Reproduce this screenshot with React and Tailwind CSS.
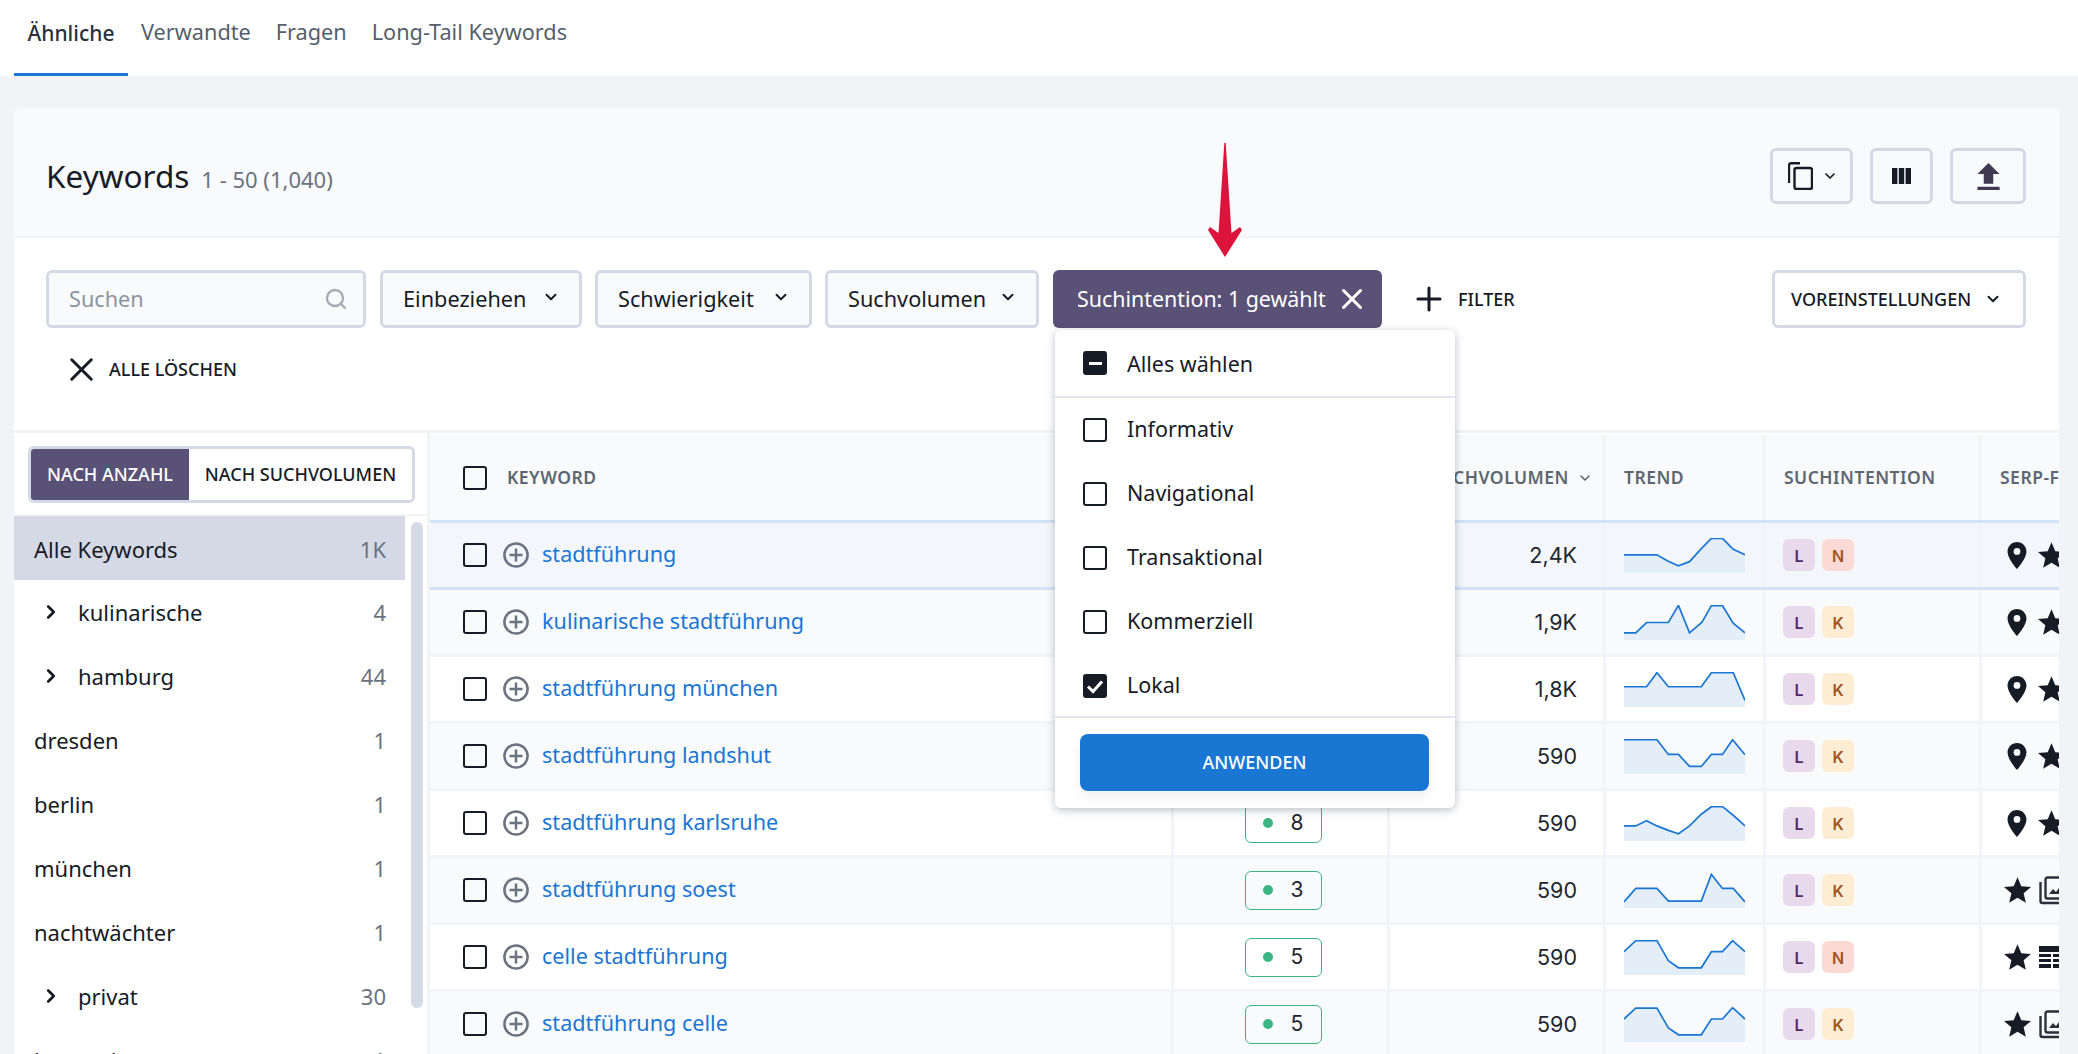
import React from "react";
import { ChevronDown, ChevronRight, Plus, Search, X } from "lucide-react";

const sans = "font-['Noto_Sans',sans-serif]";
const nums = "font-['Inter',sans-serif]";

const Pin = () => (
  <svg viewBox="5 2 14 20" className="w-[20px] h-[27px] shrink-0" fill="#171b26">
    <path d="M12 2C8.13 2 5 5.13 5 9c0 5.25 7 13 7 13s7-7.75 7-13c0-3.87-3.13-7-7-7zm0 9.5a2.5 2.5 0 010-5 2.5 2.5 0 010 5z" />
  </svg>
);

const Star = () => (
  <svg viewBox="2 2 20 19" className="w-[27px] h-[26px] shrink-0" fill="#171b26">
    <path d="M12 17.27L18.18 21l-1.64-7.03L22 9.24l-7.19-.61L12 2 9.19 8.63 2 9.24l5.46 4.73L5.82 21z" />
  </svg>
);

const Gallery = () => (
  <svg viewBox="0 0 28 29" className="w-[28px] h-[29px] shrink-0" fill="none">
    <path d="M1.5 6v19a2 2 0 0 0 2 2h20" stroke="#2b2f3a" strokeWidth="2.4" />
    <rect x="6.5" y="1.5" width="21" height="21" rx="2" stroke="#2b2f3a" strokeWidth="2.4" />
    <path d="M10 18l4-5 3 3 3-4 5 6z" fill="#2b2f3a" />
  </svg>
);

const TableIcon = () => (
  <svg viewBox="0 0 26 23" className="w-[26px] h-[23px] shrink-0" fill="#171b26">
    <rect x="0" y="0" width="26" height="6" />
    <rect x="0" y="8" width="12" height="3" />
    <rect x="14" y="8" width="12" height="3" />
    <rect x="0" y="13" width="12" height="3" />
    <rect x="14" y="13" width="12" height="3" />
    <rect x="0" y="18" width="12" height="4" />
    <rect x="14" y="18" width="12" height="4" />
  </svg>
);

const CheckBox = ({ state }) => {
  if (state === "on") {
    return (
      <span className="w-6 h-6 rounded-[3px] bg-[#171b26] flex items-center justify-center shrink-0">
        <svg viewBox="0 0 24 24" className="w-6 h-6" fill="none" stroke="#fff" strokeWidth="3">
          <path d="M5 12.5l5 5 9-10" />
        </svg>
      </span>
    );
  }
  if (state === "some") {
    return (
      <span className="w-6 h-6 rounded-[3px] bg-[#171b26] flex items-center justify-center shrink-0">
        <span className="w-[13px] h-[3px] bg-white" />
      </span>
    );
  }
  return <span className="w-6 h-6 rounded-[3px] border-[2.5px] border-[#171b26] shrink-0" />;
};

const AddIcon = () => (
  <svg viewBox="0 0 26 26" className="w-[26px] h-[26px] shrink-0" fill="none" stroke="#6b7280" strokeWidth="2.5">
    <circle cx="13" cy="13" r="11.6" />
    <path d="M13 6.5v13M6.5 13h13" />
  </svg>
);

const FilterButton = ({ label, width }) => (
  <button className={`${width} h-[58px] rounded-md border-[3px] border-[#d5d8e5] bg-[#f9fafc] flex items-center justify-between pl-[20px] pr-[19px] text-[21.7px] text-[#171b26] shrink-0`}>
    <span>{label}</span>
    <ChevronDown size={18} strokeWidth={2.6} className="mb-1" />
  </button>
);

const Spark = ({ pts }) => {
  const line = pts.map((p) => p.join(",")).join(" ");
  const area = `0,100 ${line} 360,100`;
  return (
    <svg viewBox="0 -2 360 102" className="w-[121px] h-[35px]" preserveAspectRatio="none">
      <polygon points={area} fill="#e3eef9" />
      <polyline points={line} fill="none" stroke="#1976d2" strokeWidth="5" />
    </svg>
  );
};

const Intent = ({ k }) => {
  const cls = {
    L: "bg-[#e8d9ec] text-[#4f2a6b]",
    N: "bg-[#fbdad6] text-[#a0551f]",
    K: "bg-[#feedd3] text-[#a0551f]",
  };
  return (
    <span className={`${cls[k]} ${nums} w-8 h-8 pt-px rounded-md flex items-center justify-center text-[16px] font-semibold`}>
      {k}
    </span>
  );
};

const rows = [
  { kw: "stadtführung", d: "", vol: "2,4K", i: "N", serp: "pin", bg: "bg-[#f3f7fc]", first: true,
    pts: [[0,47],[98,47],[130,65],[162,79],[195,67],[230,29],[260,-1],[293,-1],[325,31],[360,47]] },
  { kw: "kulinarische stadtführung", d: "", vol: "1,9K", i: "K", serp: "pin", bg: "bg-[#f9fafc]",
    pts: [[0,79],[35,79],[67,49],[132,49],[162,-1],[195,79],[232,48],[260,0],[293,0],[325,51],[360,79]] },
  { kw: "stadtführung münchen", d: "", vol: "1,8K", i: "K", serp: "pin", bg: "bg-white",
    pts: [[0,41],[67,41],[98,0],[132,41],[230,41],[260,0],[325,0],[360,81]] },
  { kw: "stadtführung landshut", d: "", vol: "590", i: "K", serp: "pin", bg: "bg-[#f9fafc]",
    pts: [[0,0],[98,0],[132,43],[162,43],[195,78],[230,78],[260,43],[293,43],[323,0],[360,44]] },
  { kw: "stadtführung karlsruhe", d: "8", vol: "590", i: "K", serp: "pin", bg: "bg-white",
    pts: [[0,56],[35,56],[67,41],[98,56],[132,69],[162,79],[195,56],[230,22],[260,0],[293,0],[325,25],[360,56]] },
  { kw: "stadtführung soest", d: "3", vol: "590", i: "K", serp: "gallery", bg: "bg-[#f9fafc]",
    pts: [[0,82],[35,43],[98,43],[132,80],[230,80],[260,2],[293,43],[325,43],[360,82]] },
  { kw: "celle stadtführung", d: "5", vol: "590", i: "N", serp: "table", bg: "bg-white",
    pts: [[0,32],[35,0],[98,0],[132,58],[162,79],[230,79],[260,32],[293,32],[323,0],[360,32]] },
  { kw: "stadtführung celle", d: "5", vol: "590", i: "K", serp: "gallery", bg: "bg-[#f9fafc]",
    pts: [[0,33],[35,1],[98,1],[132,59],[162,79],[230,79],[260,33],[293,33],[323,0],[360,33]] },
];

const groups = [
  { name: "kulinarische", n: "4", more: true },
  { name: "hamburg", n: "44", more: true },
  { name: "dresden", n: "1" },
  { name: "berlin", n: "1" },
  { name: "münchen", n: "1" },
  { name: "nachtwächter", n: "1" },
  { name: "privat", n: "30", more: true },
  { name: "bremerhaven", n: "1" },
];

const cell = "border-r-[3px] border-[#f3f4f8] flex items-center";
const headCell = "border-r-[3px] border-[#f3f4f8] flex items-center whitespace-nowrap text-[17.5px] font-semibold tracking-[0.5px] text-[#5c6670]";
const gridCols = "grid grid-cols-[744px_216px_216px_160px_216px_120px]";
const choices = ["Informativ", "Navigational", "Transaktional", "Kommerziell"];

export default function App() {
  return (
    <div className={`${sans} relative h-[1054px] overflow-hidden bg-[#f2f3f7] text-[#171b26]`}>
      <nav className="h-[76px] bg-white flex pl-[14px] text-[21.7px] text-[#555f6b]">
        <a className="w-[114px] h-full border-b-[3px] border-[#1976d2] text-[#2b2f3a] font-medium text-[21px] flex justify-center pt-[18px]">Ähnliche</a>
        <a className="ml-[13px] pt-[16px]">Verwandte</a>
        <a className="ml-[25px] pt-[16px]">Fragen</a>
        <a className="ml-[25px] pt-[16px]">Long-Tail Keywords</a>
      </nav>

      <main className="mt-[32px] ml-[14px] mr-[19px] rounded-t-md overflow-hidden bg-white">
        <header className="h-[130px] pt-[8px] bg-[#f9fafc] border-b-2 border-[#f2f3f7] flex items-center justify-between pl-[32px] pr-[33px]">
          <div className="flex items-baseline gap-[12px]">
            <h1 className="text-[31.5px]">Keywords</h1>
            <span className="text-[22px] text-[#6b7280]">1 - 50 (1,040)</span>
          </div>
          <div className="flex gap-[17px]">
            <button className="w-[83px] h-[56px] rounded-md border-[3px] border-[#d5d8e5] flex items-center pl-[15px] gap-[9px]">
              <svg viewBox="0 0 25 28" className="w-[25px] h-[28px]" fill="none" stroke="#171b26" strokeWidth="2.4">
                <path d="M12 1.2H3a2 2 0 0 0-2 2V21" />
                <rect x="6.5" y="6" width="17.5" height="21" rx="2" />
              </svg>
              <ChevronDown size={16} strokeWidth={2.6} />
            </button>
            <button className="w-[63px] h-[56px] rounded-md border-[3px] border-[#d5d8e5] flex items-center justify-center">
              <svg viewBox="0 0 19 16" className="w-[19px] h-[16px]" fill="#171b26">
                <rect x="0" y="0" width="5.4" height="16" />
                <rect x="6.8" y="0" width="5.4" height="16" />
                <rect x="13.6" y="0" width="5.4" height="16" />
              </svg>
            </button>
            <button className="w-[76px] h-[56px] rounded-md border-[3px] border-[#d5d8e5] flex items-center justify-center">
              <svg viewBox="5 3 14 17" className="w-[23px] h-[27px]" fill="#3f3a52">
                <path d="M9 16h6v-6h4l-7-7-7 7h4zm-4 2h14v2H5z" />
              </svg>
            </button>
          </div>
        </header>

        <section className="h-[192px] pt-[32px] pl-[32px] pr-[33px]">
          <div className="flex items-center">
            <div className="w-[320px] h-[58px] rounded-md border-[3px] border-[#d5d8e5] bg-[#f9fafc] flex items-center justify-between pl-[20px] pr-[15px] text-[21.7px] text-[#8d949e] shrink-0">
              <span>Suchen</span>
              <Search size={24} strokeWidth={2.3} className="text-[#a5abb5]" />
            </div>
            <div className="flex gap-[13px] ml-[14px]">
              <FilterButton label="Einbeziehen" width="w-[202px]" />
              <FilterButton label="Schwierigkeit" width="w-[217px]" />
              <FilterButton label="Suchvolumen" width="w-[214px]" />
              <button className="w-[329px] ml-px h-[58px] rounded-md bg-[#5a5276] text-white flex items-center justify-between pl-[24px] pr-[13px] text-[21.4px] whitespace-nowrap shrink-0">
                <span>Suchintention: 1 gewählt</span>
                <X size={34} strokeWidth={2.1} />
              </button>
            </div>
            <button className="ml-[28px] flex items-center gap-[10px] text-[18px] font-medium">
              <Plus size={38} strokeWidth={1.9} />
              FILTER
            </button>
            <button className="ml-auto w-[254px] h-[58px] rounded-md border-[3px] border-[#d5d8e5] flex items-center justify-between pl-[16px] pr-[21px] text-[18px] font-medium">
              VOREINSTELLUNGEN
              <ChevronDown size={18} strokeWidth={2.6} />
            </button>
          </div>
          <button className="mt-[22px] ml-[16px] w-fit flex items-center gap-[8px] text-[18px] font-medium">
            <X size={39} strokeWidth={1.85} />
            ALLE LÖSCHEN
          </button>
        </section>

        <div className="flex border-t-[3px] border-[#f2f3f7]">
          <aside className="w-[413px] shrink-0 bg-white">
            <div className="h-[83px] pt-[13px] pl-[14px] pr-[12px] border-b-2 border-[#f2f3f7]">
              <div className="h-[57px] rounded-md border-[3px] border-[#d5d8e5] flex text-[18px] font-medium overflow-hidden whitespace-nowrap">
                <div className="w-[158px] bg-[#5a5276] text-white flex items-center justify-center">NACH ANZAHL</div>
                <div className="flex-1 flex items-center justify-center">NACH SUCHVOLUMEN</div>
              </div>
            </div>
            <div className="flex">
              <ul className="w-[391px] text-[22px]">
                <li className="h-[64px] pt-[2px] bg-[#d5d8e5] flex items-center justify-between pl-[20px] pr-[19px]">
                  <span>Alle Keywords</span>
                  <span className="text-[#6b7280]">1K</span>
                </li>
                {groups.map((g) => (
                  <li key={g.name} className="h-[64px] flex items-center justify-between pl-[20px] pr-[19px]">
                    <span className="flex items-center">
                      {g.more && <ChevronRight size={22} strokeWidth={3} className="ml-[6px] mr-[16px]" />}
                      {g.name}
                    </span>
                    <span className="text-[#6b7280]">{g.n}</span>
                  </li>
                ))}
              </ul>
              <div className="ml-[6px] mt-[6px] w-3 h-[486px] rounded-md bg-[#d5d8e5]" />
            </div>
          </aside>

          <div className="flex-1 min-w-0 border-l-[3px] border-[#f2f3f7] overflow-hidden">
            <div className={`${gridCols} h-[85px] bg-[#f9fafc] mt-[2px]`}>
              <div className={`${headCell} pl-[33px] gap-[20px]`}>
                <CheckBox />
                KEYWORD
              </div>
              <div className={`${headCell} justify-center`}>SCHWIERIGKEIT</div>
              <div className={`${headCell} justify-end pr-[10px] gap-[8px]`}>
                SUCHVOLUMEN
                <ChevronDown size={16} strokeWidth={2.4} />
              </div>
              <div className={`${headCell} pl-[18px]`}>TREND</div>
              <div className={`${headCell} pl-[18px]`}>SUCHINTENTION</div>
              <div className={`${headCell} pl-[18px]`}>SERP-FEATURES</div>
            </div>

            {rows.map((r) => (
              <div
                key={r.kw}
                className={`${gridCols} ${r.bg} ${
                  r.first ? "h-[70px] border-y-[3px] border-[#d2e3f8]" : "h-[67px] border-b-[3px] border-[#f3f4f8]"
                }`}
              >
                <div className={`${cell} pl-[33px]`}>
                  <CheckBox />
                  <span className="ml-[16px]"><AddIcon /></span>
                  <a className="ml-[13px] pb-px text-[21.6px] text-[#1976d2]">{r.kw}</a>
                </div>
                <div className={`${cell} justify-center`}>
                  {r.d && (
                    <span className={`${nums} w-[77px] h-[39px] ml-[5px] rounded-md border-[1.5px] border-[#3bb583] flex items-center pl-[17px] gap-[18px] text-[21px] text-[#23262f]`}>
                      <span className="w-[10px] h-[10px] rounded-full bg-[#3bb583]" />
                      {r.d}
                    </span>
                  )}
                </div>
                <div className={`${cell} ${nums} justify-end pr-[26px] text-[21.5px] text-[#23262f]`}>{r.vol}</div>
                <div className={`${cell} pl-[18px]`}>
                  <Spark pts={r.pts} />
                </div>
                <div className={`${cell} pl-[17px] gap-[7px]`}>
                  <Intent k="L" />
                  <Intent k={r.i} />
                </div>
                <div className="flex items-center gap-[8px] pl-[22px]">
                  {r.serp === "pin" ? (
                    <span className="pl-[3px] mr-[3px]"><Pin /></span>
                  ) : (
                    <Star />
                  )}
                  {r.serp === "pin" && <Star />}
                  {r.serp === "gallery" && <Gallery />}
                  {r.serp === "table" && <TableIcon />}
                </div>
              </div>
            ))}
          </div>
        </div>
      </main>

      <svg viewBox="0 0 34 114" className="absolute left-[1208px] top-[143px] w-[34px] h-[114px]" fill="#dc143c">
        <path d="M16.3 0L17.7 0L23.5 90L32 84L34 87L17 114L0 87L2 84L10.5 90Z" />
      </svg>

      <div className="absolute left-[1055px] top-[330px] w-[400px] h-[478px] bg-white rounded-md shadow-[0_2px_8px_rgba(60,65,90,0.35)] text-[21.5px]">
        <div className="h-[68px] border-b-2 border-[#e3e5ee] flex items-center pl-[28px] gap-[20px]">
          <CheckBox state="some" />
          <span className="pt-[2px]">Alles wählen</span>
        </div>
        <ul className="h-[320px] border-b-2 border-[#e3e5ee]">
          {choices.map((c) => (
            <li key={c} className="h-[64px] flex items-center pl-[28px] gap-[20px]">
              <CheckBox />
              <span className="pb-[2px]">{c}</span>
            </li>
          ))}
          <li className="h-[64px] flex items-center pl-[28px] gap-[20px]">
            <CheckBox state="on" />
            <span className="pb-[2px]">Lokal</span>
          </li>
        </ul>
        <div className="pt-[16px] pl-[25px] pr-[26px]">
          <button className="w-full h-[57px] rounded-lg bg-[#1976d2] text-white text-[18px] font-medium shadow-[0_6px_12px_rgba(60,65,90,0.08)]">
            ANWENDEN
          </button>
        </div>
      </div>
    </div>
  );
}
